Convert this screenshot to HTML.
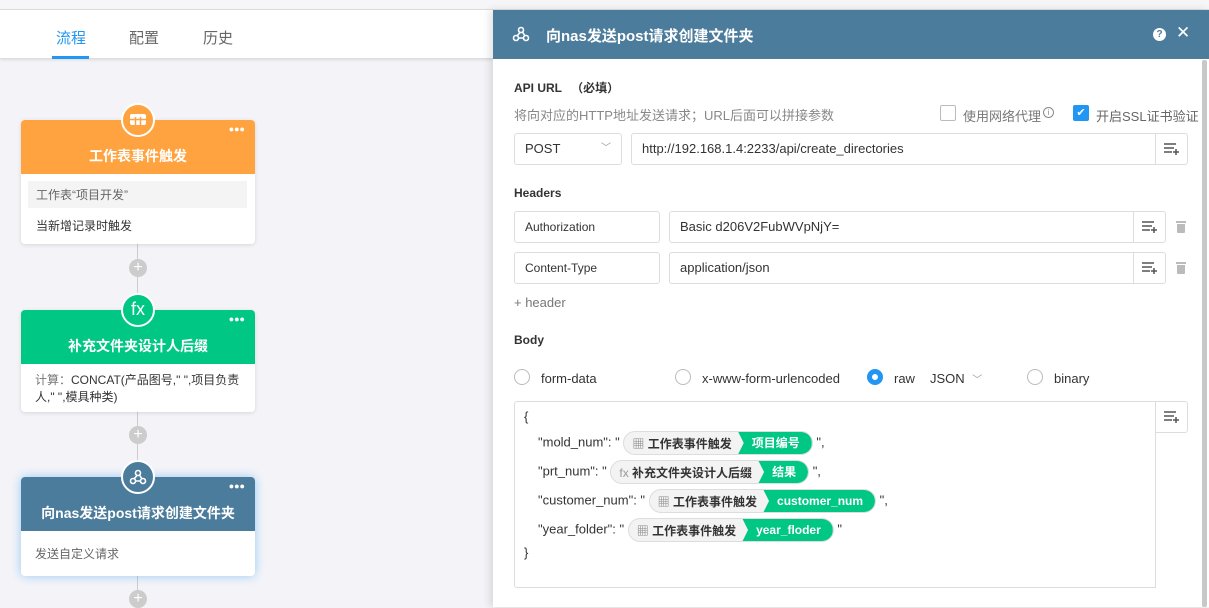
<!DOCTYPE html>
<html><head><meta charset="utf-8"><style>
*{box-sizing:border-box;margin:0;padding:0}
body{width:1209px;height:607px;overflow:hidden;position:relative;background:#f4f4f8;font-family:"Liberation Sans","Noto Sans CJK SC",sans-serif;font-size:13px;color:#333}
.abs{position:absolute}
.top{left:0;top:0;width:1209px;height:10px;background:#f6f6f8;border-bottom:1px solid #e0e0e0}
.tabs{left:0;top:10px;width:493px;height:49px;background:#fff;border-bottom:1px solid #ddd;box-shadow:0 1px 3px rgba(0,0,0,.1)}
.tab{position:absolute;top:17px;font-size:15px;color:#666}
.card{position:absolute;left:21px;width:234px;background:#fff;border-radius:4px;box-shadow:0 1px 4px rgba(0,0,0,.12)}
.ch{height:54px;border-radius:4px 4px 0 0;color:#fff;font-weight:bold;font-size:14px;text-align:center;padding-top:26px;position:relative}
.dots{position:absolute;right:10px;top:4px;font-size:9px;letter-spacing:0}
.icon{position:absolute;width:34px;height:34px;border-radius:50%;border:2px solid #fff;left:121px;color:#fff;text-align:center}
.plus{position:absolute;left:129px;width:18px;height:18px;border-radius:50%;background:#ccc;color:#fff;text-align:center;line-height:18px;font-size:16px}
.line{position:absolute;left:137px;width:1px;background:#ccc}
.panel{left:493px;top:10px;width:716px;height:597px;background:#fff;box-shadow:-3px 0 8px rgba(0,0,0,.12)}
.ph{height:49px;background:#4c7c9c;color:#fff;font-weight:bold;font-size:15px;padding:15px 0 0 53px;position:relative}
.inp{position:absolute;border:1px solid #ddd;border-radius:3px;height:32px;line-height:30px;padding-left:10px;font-size:13px;color:#333;background:#fff}
.btn{position:absolute;width:33px;height:32px;border:1px solid #ddd;border-radius:0 3px 3px 0;background:#fff}
.lbl{position:absolute;font-weight:bold;font-size:12px;color:#333}
.radio{position:absolute;width:16px;height:16px;border:1px solid #bbb;border-radius:50%;background:#fff}
.tag{display:inline-flex;align-items:center;height:24px;border:1px solid #ddd;border-radius:12px;background:#f3f3f3;font-size:12px;font-weight:bold;vertical-align:middle;overflow:hidden}
.tag .a{padding:0 6px 0 8px;color:#333}
.tag .b{background:#00c784;color:#fff;height:24px;line-height:24px;padding:0 12px 0 14px;border-radius:0 12px 12px 0;clip-path:polygon(0 0,100% 0,100% 100%,0 100%,6px 50%)}
.code div{position:absolute;font-size:13px;color:#333}
.trash{position:absolute;width:8px;height:9px;background:#bbb;border-radius:0 0 1px 1px}
.trash:before{content:"";position:absolute;left:-1px;top:-3px;width:10px;height:2px;background:#bbb}
</style></head><body>
<div class="abs top"></div>
<div class="abs tabs">
<span class="tab" style="left:56px;color:#2196f3">流程</span>
<div class="abs" style="left:52px;top:46px;width:37px;height:3px;background:#2196f3"></div>
<span class="tab" style="left:129px">配置</span>
<span class="tab" style="left:203px">历史</span>
</div>

<div class="line" style="top:244px;height:66px"></div>
<div class="line" style="top:412px;height:66px"></div>
<div class="line" style="top:576px;height:31px"></div>

<div class="card" style="top:120px;height:124px">
<div class="ch" style="background:#ffa340">工作表事件触发<span class="dots">●●●</span></div>
<div class="abs" style="left:7px;top:61px;width:219px;height:27px;background:#f4f4f4;color:#666;padding:5px 0 0 8px;font-size:12px">工作表“项目开发”</div>
<div class="abs" style="left:15px;top:97px;font-size:12px">当新增记录时触发</div>
</div>
<div class="icon" style="top:103px;background:#ffa340"><svg width="18" height="14" viewBox="0 0 18 14" style="margin-top:8px"><rect x="1" y="1" width="16" height="11" rx="2" fill="#fff"/><path d="M1 6.5h16M6.5 4v8M11.5 4v8" stroke="#ffa340" stroke-width="1.5"/></svg></div>
<div class="plus" style="top:259px">+</div>

<div class="card" style="top:310px;height:102px">
<div class="ch" style="background:#00c784">补充文件夹设计人后缀<span class="dots">●●●</span></div>
<div class="abs" style="left:14px;top:62px;font-size:12px;line-height:17px;width:210px"><span style="color:#777">计算：</span>CONCAT(产品图号," ",项目负责人," ",模具种类)</div>
</div>
<div class="icon" style="top:293px;background:#00c784;font-size:18px;line-height:28px">fx</div>
<div class="plus" style="top:426px">+</div>

<div class="card" style="top:477px;height:99px;box-shadow:0 0 10px rgba(33,150,243,.45)">
<div class="ch" style="background:#4c7c9c">向nas发送post请求创建文件夹<span class="dots">●●●</span></div>
<div class="abs" style="left:14px;top:68px;font-size:12px;color:#666">发送自定义请求</div>
</div>
<div class="icon" style="top:460px;background:#4c7c9c"><svg width="18" height="18" viewBox="0 0 18 18" style="margin-top:6px" fill="none" stroke="#fff" stroke-width="1.6"><circle cx="9" cy="5" r="2.5"/><circle cx="4" cy="13" r="2.5"/><circle cx="14" cy="13" r="2.5"/><path d="M8 7.5 5 11M10.5 7 13 11M6.5 13h5"/></svg></div>
<div class="plus" style="top:590px">+</div>

<div class="abs panel">
<div class="ph">
<svg class="abs" style="left:19px;top:15px" width="18" height="18" viewBox="0 0 18 18" fill="none" stroke="#fff" stroke-width="1.6"><circle cx="9" cy="5" r="2.5"/><circle cx="4" cy="13" r="2.5"/><circle cx="14" cy="13" r="2.5"/><path d="M8 7.5 5 11M10.5 7 13 11M6.5 13h5"/></svg>
向nas发送post请求创建文件夹
<span class="abs" style="left:660px;top:18px;width:13px;height:13px;border-radius:50%;background:#fff;color:#4c7c9c;font-size:10px;text-align:center;line-height:13px">?</span>
<span class="abs" style="left:683px;top:13px;font-size:17px;font-weight:normal">✕</span>
</div>
<div class="abs" style="right:2px;top:50px;width:5px;height:547px;background:#c8c8c8;border-radius:2px"></div>
<div class="lbl" style="left:21px;top:69px">API URL <span style="margin-left:6px">（必填）</span></div>
<div class="abs" style="left:21px;top:95px;font-size:13px;color:#888">将向对应的HTTP地址发送请求；URL后面可以拼接参数</div>
<div class="abs" style="left:447px;top:95px;width:16px;height:16px;border:1px solid #bbb;border-radius:2px"></div>
<div class="abs" style="left:470px;top:96px;color:#777">使用网络代理</div>
<div class="abs" style="left:550px;top:97px;width:11px;height:11px;border:1px solid #888;border-radius:50%;font-size:8px;text-align:center;line-height:10px;color:#888">i</div>
<div class="abs" style="left:580px;top:95px;width:16px;height:16px;background:#2196f3;border-radius:2px;color:#fff;font-size:11px;text-align:center;line-height:16px">✔</div>
<div class="abs" style="left:603px;top:96px;color:#666">开启SSL证书验证</div>

<div class="inp" style="left:21px;top:123px;width:108px">POST<span style="position:absolute;right:10px;color:#999;font-size:10px">﹀</span></div>
<div class="inp" style="left:138px;top:123px;width:525px;border-radius:3px 0 0 3px">http://192.168.1.4:2233/api/create_directories</div>
<div class="btn" style="left:662px;top:123px"><svg width="18" height="14" viewBox="0 0 18 14" style="margin:8px 0 0 7px" stroke="#555" stroke-width="1.5"><path d="M1 2h12M1 6h10M1 10h8M13 7v6M10 10h6"/></svg></div>

<div class="lbl" style="left:21px;top:176px">Headers</div>
<div class="inp" style="left:21px;top:201px;width:146px;font-size:12px">Authorization</div>
<div class="inp" style="left:176px;top:201px;width:465px;border-radius:3px 0 0 3px">Basic d206V2FubWVpNjY=</div>
<div class="btn" style="left:640px;top:201px"><svg width="18" height="14" viewBox="0 0 18 14" style="margin:8px 0 0 7px" stroke="#555" stroke-width="1.5"><path d="M1 2h12M1 6h10M1 10h8M13 7v6M10 10h6"/></svg></div>
<div class="trash" style="left:684px;top:214px"></div>
<div class="inp" style="left:21px;top:242px;width:146px;font-size:12px">Content-Type</div>
<div class="inp" style="left:176px;top:242px;width:465px;border-radius:3px 0 0 3px">application/json</div>
<div class="btn" style="left:640px;top:242px"><svg width="18" height="14" viewBox="0 0 18 14" style="margin:8px 0 0 7px" stroke="#555" stroke-width="1.5"><path d="M1 2h12M1 6h10M1 10h8M13 7v6M10 10h6"/></svg></div>
<div class="trash" style="left:684px;top:255px"></div>
<div class="abs" style="left:21px;top:285px;color:#777">+ header</div>

<div class="lbl" style="left:21px;top:323px">Body</div>
<div class="radio" style="left:21px;top:359px"></div><div class="abs" style="left:48px;top:361px">form-data</div>
<div class="radio" style="left:182px;top:359px"></div><div class="abs" style="left:209px;top:361px">x-www-form-urlencoded</div>
<div class="radio" style="left:374px;top:359px;border:5px solid #2196f3"></div><div class="abs" style="left:401px;top:361px">raw</div>
<div class="abs" style="left:437px;top:361px">JSON <span style="color:#999;font-size:10px;margin-left:4px">﹀</span></div>
<div class="radio" style="left:534px;top:359px"></div><div class="abs" style="left:561px;top:361px">binary</div>

<div class="abs" style="left:21px;top:391px;width:642px;height:187px;border:1px solid #ddd;border-radius:3px 0 0 3px"></div>
<div class="btn" style="left:662px;top:391px"><svg width="18" height="14" viewBox="0 0 18 14" style="margin:8px 0 0 7px" stroke="#555" stroke-width="1.5"><path d="M1 2h12M1 6h10M1 10h8M13 7v6M10 10h6"/></svg></div>
<div class="code">
<div style="left:31px;top:399px">{</div>
<div style="left:45px;top:421px">"mold_num": " <span class="tag"><span class="a"><span style="color:#888">▦</span> 工作表事件触发</span><span class="b">项目编号</span></span> ",</div>
<div style="left:45px;top:450px">"prt_num": " <span class="tag"><span class="a"><span style="color:#999;font-weight:normal">fx</span> 补充文件夹设计人后缀</span><span class="b">结果</span></span> ",</div>
<div style="left:45px;top:479px">"customer_num": " <span class="tag"><span class="a"><span style="color:#888">▦</span> 工作表事件触发</span><span class="b">customer_num</span></span> ",</div>
<div style="left:45px;top:508px">"year_folder": " <span class="tag"><span class="a"><span style="color:#888">▦</span> 工作表事件触发</span><span class="b">year_floder</span></span> "</div>
<div style="left:31px;top:535px">}</div>
</div>
</div>
</body></html>
